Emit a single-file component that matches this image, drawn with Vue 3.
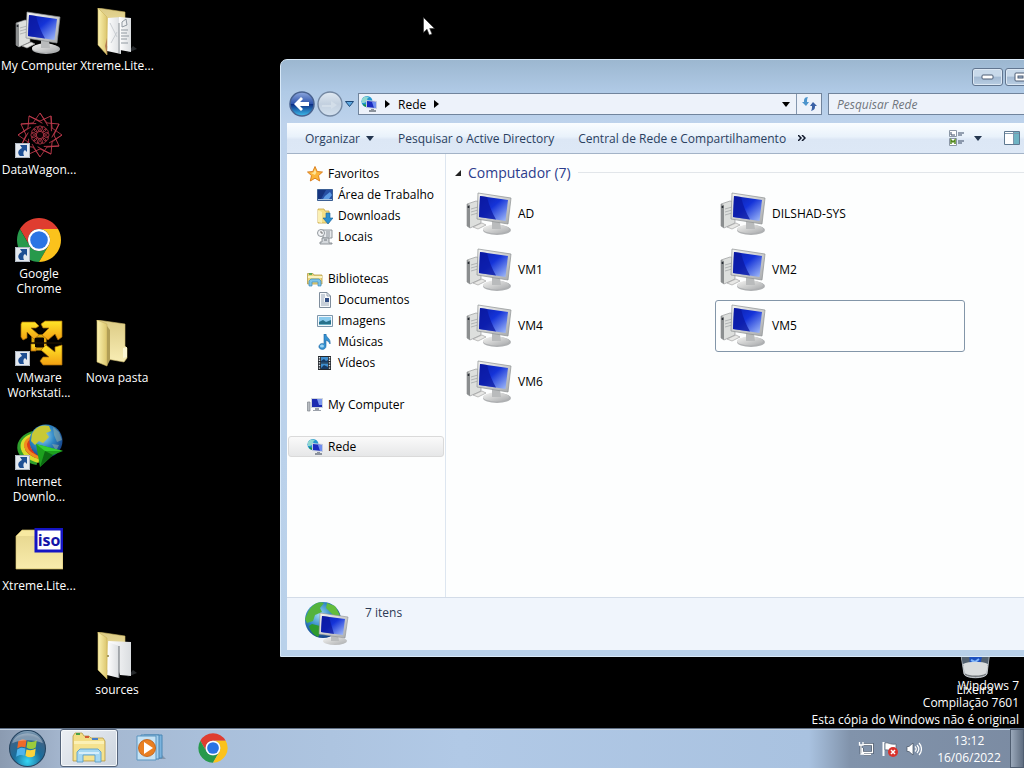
<script setup>
import { ref } from 'vue'

const shortcuts = [
  { name: 'My\u00a0Computer', icon: 'computer', col: 1, row: 1 },
  { name: 'Xtreme.Lite...', icon: 'folder-docs', col: 2, row: 1 },
  { name: 'DataWagon...', icon: 'datawagon', col: 1, row: 2, link: true },
  { name: 'Google Chrome', icon: 'chrome', col: 1, row: 3, link: true },
  { name: 'VMware Workstati...', icon: 'vmware', col: 1, row: 4, link: true },
  { name: 'Nova pasta', icon: 'folder', col: 2, row: 4 },
  { name: 'Internet Downlo...', icon: 'idm', col: 1, row: 5, link: true },
  { name: 'Xtreme.Lite...', icon: 'iso', col: 1, row: 6, tag: 'iso' },
  { name: 'sources', icon: 'folder-files', col: 2, row: 7 },
  { name: 'Lixeira', icon: 'bin', col: 13, row: 7 }
]

const tree = [
  {
    name: 'Favoritos',
    icon: 'star',
    items: [
      { name: 'Área de Trabalho', icon: 'desk' },
      { name: 'Downloads', icon: 'downloads' },
      { name: 'Locais', icon: 'places' }
    ]
  },
  {
    name: 'Bibliotecas',
    icon: 'library',
    items: [
      { name: 'Documentos', icon: 'document' },
      { name: 'Imagens', icon: 'image' },
      { name: 'Músicas', icon: 'music' },
      { name: 'Vídeos', icon: 'video' }
    ]
  },
  { name: 'My Computer', icon: 'pc', items: [] },
  { name: 'Rede', icon: 'network', items: [] }
]

const computers = ['AD', 'DILSHAD-SYS', 'VM1', 'VM2', 'VM4', 'VM5', 'VM6']

const location = ref('Rede')
const focused = ref('VM5')
const search = ref('')
</script>

<template>
  <div class="screen">
    <svg class="sprite" aria-hidden="true">
      <defs>
        <linearGradient id="g-screen" x1="0" y1="0" x2="1" y2="1">
          <stop offset="0" stop-color="#0a1ea8" />
          <stop offset="0.45" stop-color="#1433d8" />
          <stop offset="1" stop-color="#a9c2fa" />
        </linearGradient>
        <linearGradient id="g-grey" x1="0" y1="0" x2="1" y2="1">
          <stop offset="0" stop-color="#f4f4f2" />
          <stop offset="1" stop-color="#a9abad" />
        </linearGradient>
        <linearGradient id="g-folder" x1="0" y1="0" x2="1" y2="0">
          <stop offset="0" stop-color="#fbf2b0" />
          <stop offset="1" stop-color="#dcc66e" />
        </linearGradient>
        <linearGradient id="g-back" x1="0" y1="0" x2="0" y2="1">
          <stop offset="0" stop-color="#dccb85" />
          <stop offset="1" stop-color="#f8edb4" />
        </linearGradient>
        <linearGradient id="g-paper" x1="0" y1="0" x2="1" y2="0">
          <stop offset="0" stop-color="#ffffff" />
          <stop offset="1" stop-color="#dadde0" />
        </linearGradient>
        <radialGradient id="g-globe" cx="0.4" cy="0.35" r="0.7">
          <stop offset="0" stop-color="#9fdcf6" />
          <stop offset="0.5" stop-color="#2f86c4" />
          <stop offset="1" stop-color="#123a80" />
        </radialGradient>
        <linearGradient id="g-gold" x1="0" y1="0" x2="0" y2="1">
          <stop offset="0" stop-color="#ffe628" />
          <stop offset="1" stop-color="#f2a012" />
        </linearGradient>
        <radialGradient id="g-orb" cx="0.5" cy="0.85" r="0.85">
          <stop offset="0" stop-color="#36d6f4" />
          <stop offset="0.45" stop-color="#1b6d9c" />
          <stop offset="0.8" stop-color="#3e6285" />
          <stop offset="1" stop-color="#8ba9c0" />
        </radialGradient>
        <linearGradient id="g-back-btn" x1="0" y1="0" x2="0" y2="1">
          <stop offset="0" stop-color="#8ea8de" />
          <stop offset="0.48" stop-color="#2f55ac" />
          <stop offset="0.52" stop-color="#0d2f86" />
          <stop offset="1" stop-color="#3dc0ee" />
        </linearGradient>
        <linearGradient id="g-fwd-btn" x1="0" y1="0" x2="0" y2="1">
          <stop offset="0" stop-color="#e1eaf3" />
          <stop offset="0.5" stop-color="#c3d0df" />
          <stop offset="1" stop-color="#d3e1ef" />
        </linearGradient>
      </defs>

      <symbol id="i-computer" viewBox="0 -1 48 48">
        <path d="M1 14L10 11L15 12V33L4 38L1 36Z" fill="#dddfdd" stroke="#898c8d" stroke-width="0.6" />
        <path d="M1 14L4 15V38L1 36Z" fill="#8b8e8f" />
        <path d="M5 19L12 17M5 22L12 20M5 25L12 23" stroke="#a5a8a9" stroke-width="0.8" />
        <circle cx="2.5" cy="17" r="1" fill="#20252c" />
        <path d="M7 37L16 33L20 35L12 39Z" fill="#e8e8e6" stroke="#999" stroke-width="0.6" />
        <ellipse cx="31" cy="40" rx="14" ry="5" fill="#aeb0b2" />
        <ellipse cx="30" cy="39" rx="13" ry="4.4" fill="url(#g-grey)" />
        <path d="M26 31L34 32L35 39H26Z" fill="#b9bbbc" />
        <path d="M12 3L45 8L42 34L11 29Z" fill="url(#g-grey)" stroke="#8d9092" stroke-width="0.7" />
        <path d="M14 6L42 10L39.5 31L13 27Z" fill="url(#g-screen)" />
        <path d="M14 6L21 7C23 15 26 23 30 29.5L13 27Z" fill="#0b18a0" opacity="0.75" />
      </symbol>

      <symbol id="i-folder-docs" viewBox="0 0 48 48">
        <path d="M34 45L44 41L40 38Z" fill="#26292c" />
        <path d="M5 0L32 4V38H12Z" fill="url(#g-back)" stroke="#c9b462" stroke-width="0.6" />
        <path d="M15 10L28 9V46L14 43Z" fill="url(#g-paper)" />
        <path d="M26 9L38 10V44L27 42Z" fill="url(#g-paper)" />
        <path d="M29 14L33 11L34 17L29 19ZM28 22H35M28 25H34M28 28H36M28 31H34M28 35H35" fill="none" stroke="#9098a0" />
        <path d="M17 15L24 29M18 35L24 24" stroke="#c0c5ca" stroke-width="0.8" />
        <path d="M26 15V45" stroke="#8a9096" />
        <path d="M5 0L14 9V47L5 37Z" fill="url(#g-folder)" stroke="#cab35c" stroke-width="0.6" />
        <path d="M12 38L14 30V47Z" fill="#a35b49" opacity="0.7" />
      </symbol>

      <symbol id="i-folder-files" viewBox="0 0 48 48">
        <path d="M34 45L44 41L40 38Z" fill="#26292c" />
        <path d="M5 0L32 4V38H12Z" fill="url(#g-back)" stroke="#c9b462" stroke-width="0.6" />
        <path d="M15 9L38 10V44L27 43Z" fill="url(#g-paper)" />
        <path d="M15 10L26 14V46L14 43Z" fill="url(#g-paper)" />
        <path d="M26 14V46" stroke="#676d72" />
        <path d="M5 0L14 6V47L5 38Z" fill="url(#g-folder)" stroke="#cab35c" stroke-width="0.6" />
        <circle cx="15" cy="24" r="1" fill="#8f823f" />
      </symbol>

      <symbol id="i-folder" viewBox="0 0 48 48">
        <path d="M4 0L32 4V26L34 28V38L31 42L14 39Z" fill="url(#g-back)" stroke="#cdb96d" stroke-width="0.6" />
        <path d="M30 28L34 27V37L30 38Z" fill="#fbf6d2" />
        <path d="M4 0L14 4V46L4 42Z" fill="url(#g-folder)" stroke="#c7b162" stroke-width="0.6" />
        <path d="M14 46L17 40V10L14 6Z" fill="#b19e56" />
      </symbol>

      <symbol id="i-datawagon" viewBox="0 0 48 48">
        <g fill="none" stroke="#c03a4c" stroke-width="0.8">
          <path
            v-for="n in 12"
            :key="n"
            d="M18 11L25 1L32 11M25 1L33 14M25 20C21 17 22 14 25 14S29 17 25 20"
            :transform="`rotate(${n * 30} 25 23)`"
          />
        </g>
        <circle cx="25" cy="23" r="3" fill="#0c0204" />
      </symbol>

      <symbol id="i-chrome" viewBox="0 0 48 48">
        <path d="M24 13H43.05A22 22 0 0 0 4.95 13L14.47 29.5A11 11 0 0 1 24 13Z" fill="#df3d30" />
        <path d="M4.95 13A22 22 0 0 0 24 46L33.53 29.5A11 11 0 0 1 14.47 29.5Z" fill="#27994b" />
        <path d="M43.05 13A22 22 0 0 1 24 46L33.53 29.5A11 11 0 0 0 24 13Z" fill="#fbc21c" />
        <circle cx="24" cy="24" r="11" fill="#fff" />
        <circle cx="24" cy="24" r="8.8" fill="#2a74e4" />
      </symbol>

      <symbol id="i-vmware" viewBox="0 0 48 48">
        <path d="M18 16H30V29H18Z" fill="none" stroke="#e0a80c" stroke-width="3" />
        <g fill="url(#g-gold)" stroke="#a86a06" stroke-width="0.7">
          <path d="M7 2H20L24 6L21 8H16L24 15L19 19L12 12V18L8 20L6 17V4Z" />
          <path d="M47 1V17L43 20L40 14L33 20L27 15L34 8H28L26 4L30 1Z" />
          <path d="M47 45H28L25 41L28 37H34L26 30L31 25L40 32V27L47 25Z" />
          <path d="M16 24H21V31H16Z" />
        </g>
        <path d="M20 18H29V27H20Z" fill="#080400" />
        <path d="M15 23H47" stroke="#1a1000" stroke-width="1.5" />
      </symbol>

      <symbol id="i-idm" viewBox="0 0 48 48">
        <g fill="none" stroke-width="4">
          <path d="M18 9C0 14 -2 34 22 39" stroke="#2f9e2c" />
          <path d="M19 11C3 15 3 31 24 37" stroke="#d6dc2c" />
          <path d="M20 13C7 16 7 28 26 34" stroke="#f08a1e" />
          <path d="M21 15C11 18 11 26 27 31" stroke="#d93a1a" />
          <path d="M22 18C15 20 16 25 28 29" stroke="#efc9b4" />
          <path d="M18 24L28 30" stroke="#080808" />
        </g>
        <circle cx="31" cy="17" r="16.5" fill="url(#g-globe)" />
        <path d="M17 10C20 3 27 0 34 2L36 7L31 9L34 13L28 19L24 17L20 21L16 17Z" fill="#c8c936" />
        <path d="M38 3L44 8L47 16L42 18L39 11ZM37 20L44 21L41 27Z" fill="#9fb7a8" opacity="0.5" />
        <path d="M21 20L48 27L38 31L25 43Z" fill="#1da01e" />
        <path d="M21 20L48 27L30 27Z" fill="#35cf32" />
        <path d="M30 27L38 31L25 43Z" fill="#0c6a12" />
      </symbol>

      <symbol id="i-iso" viewBox="0 0 48 48">
        <path d="M1 8L7 2H20L22 6H48V41H1Z" fill="#f8e9a1" stroke="#cbb966" stroke-width="0.7" />
        <path d="M1 8H47V40H1Z" fill="url(#g-back)" opacity="0.55" />
        <path d="M21 1H47V23H21Z" fill="#fff" stroke="#1414c4" stroke-width="3" />
      </symbol>

      <symbol id="i-bin" viewBox="0 0 48 48">
        <path d="M8 10L40 10L36 42C34 47 15 47 13 42Z" fill="#a5abb0" stroke="#dfe5ea" stroke-width="0.8" />
        <path d="M10 22H38L37 34H12Z" fill="#53616f" />
        <path d="M18 20H32L29 34H19Z" fill="#1c4fbe" />
        <path d="M20 28L24 30L28 27" fill="none" stroke="#7eb4fa" stroke-width="2" />
        <path d="M12 32C18 29 31 29 37 32L35 42C31 45 17 45 14 42Z" fill="#d9dcdd" />
        <path d="M14 42C18 45 31 45 35 42" fill="none" stroke="#74797d" stroke-width="1.5" />
      </symbol>

      <symbol id="i-link" viewBox="0 0 15 15">
        <path d="M0 0H15V15H0Z" fill="#e4e9ef" />
        <path d="M0.5 0.5H14.5V14.5H0.5Z" fill="none" stroke="#aeb6c0" />
        <path d="M5 2H12V9L10 7C8 8 8 11 9 13H5C2 10 3 7 7 5Z" fill="#1e4f93" />
      </symbol>

      <symbol id="i-network" viewBox="0 0 16 16">
        <circle cx="6" cy="5.5" r="5.5" fill="#2496cf" />
        <path d="M1 3C3 0 6 0 8 1L6 3L7 5L3 7L1 7Z" fill="#8fd8d0" />
        <path d="M2 8L6 9L5 11C3 10 2 9 2 8Z" fill="#1f9440" />
        <path d="M5 4L16 5V13L5 12Z" fill="#c3cbe0" />
        <path d="M6 5L15 6V12L6 11Z" fill="#1a2cc0" />
        <path d="M11 6L15 6V12L13 12Z" fill="#6f8ef0" />
        <path d="M10 13H13V14H15V16H8V14H10Z" fill="#8b929c" />
      </symbol>

      <symbol id="i-network-big" viewBox="0 0 44 48">
        <circle cx="18" cy="20" r="18" fill="url(#g-globe)" />
        <path d="M3 12C8 3 15 1 19 3L15 8L17 12L10 15L8 21L2 23L0 19Z" fill="#54b33d" />
        <path d="M22 3L30 6L35 15L30 17L25 12L21 8Z" fill="#63bd3c" />
        <path d="M7 24L15 26L17 31L13 37C8 35 5 30 4 26Z" fill="#2e9a2d" />
        <ellipse cx="30" cy="41" rx="12" ry="4" fill="url(#g-grey)" />
        <path d="M26 34H33L34 41H26Z" fill="#b9bbbc" />
        <path d="M15 13L43 17L40 38L14 34Z" fill="url(#g-grey)" stroke="#8d9092" stroke-width="0.6" />
        <path d="M17 16L40 19L38 35L16 32Z" fill="url(#g-screen)" />
        <path d="M17 16L24 17L29 34L16 32Z" fill="#0b18a0" opacity="0.75" />
      </symbol>

      <symbol id="i-star" viewBox="0 0 16 16">
        <path d="M8 0.5L10.2 5.5L15.5 6L11.5 9.6L12.7 15L8 12.2L3.3 15L4.5 9.6L0.5 6L5.8 5.5Z" fill="#fbb53a" stroke="#d87a18" stroke-width="0.9" />
        <path d="M8 3L9.3 6.5L8 9L4 7L6.5 6.5Z" fill="#ffe59a" />
      </symbol>

      <symbol id="i-desk" viewBox="0 0 16 16">
        <path d="M0.5 2.5H15.5V13.5H0.5Z" fill="#2750a4" stroke="#3b5f93" />
        <path d="M1 3H9L4 12H1Z" fill="#16347f" />
        <path d="M8 9L13 5L15 8L12 12H6Z" fill="#5c9be4" />
        <path d="M1 12H15V13H1Z" fill="#a6c4e2" />
      </symbol>

      <symbol id="i-downloads" viewBox="0 0 16 16">
        <path d="M1 1H7L8 3H12V15H1Z" fill="#f3df86" stroke="#c6a544" stroke-width="0.8" />
        <path d="M1 2L5 4V15L1 14Z" fill="#fbf0b4" />
        <path d="M9 5H13V10H16L11 16L6 10H9Z" fill="#2b8fd0" stroke="#1a6299" stroke-width="0.6" />
      </symbol>

      <symbol id="i-places" viewBox="0 0 16 16">
        <path d="M5 1H15V9H6V6Z" fill="#e6e9ec" stroke="#878d93" stroke-width="0.9" />
        <path d="M9 3H13M9 5H13M9 7H13" stroke="#8b9299" />
        <circle cx="4" cy="4" r="3.5" fill="#f2f4f6" stroke="#878d93" stroke-width="0.9" />
        <path d="M4 2V4H6" fill="none" stroke="#555" stroke-width="0.8" />
        <path d="M5 9H12V14H15V15H3V13H5Z" fill="#d5d9dd" stroke="#868c92" stroke-width="0.9" />
        <path d="M7 11H10" stroke="#70777d" />
      </symbol>

      <symbol id="i-library" viewBox="0 0 16 16">
        <path d="M0.5 2.5H6L7 4H15V13H0.5Z" fill="#e9d67e" stroke="#b59c47" stroke-width="0.8" />
        <path d="M2 3H5" stroke="#3ea04a" stroke-width="1.5" />
        <path d="M1 6H15" stroke="#fbf3c2" stroke-width="2" />
        <path d="M2 15V10L4 8H12L14 10V15H11V11H5V15Z" fill="#7cc3e8" stroke="#3c8bbb" stroke-width="0.7" />
      </symbol>

      <symbol id="i-document" viewBox="0 0 16 16">
        <path d="M2.5 0.5H10L13.5 4V15.5H2.5Z" fill="#f8fafc" stroke="#7f8d9c" />
        <path d="M10 0.5V4H13.5" fill="none" stroke="#7f8d9c" stroke-width="0.8" />
        <path d="M4 3H8M4 5H8M4 7H7M4 9H7M4 11H12M4 13H12" stroke="#8c9cae" stroke-width="0.9" />
        <path d="M8 6H12V10H8Z" fill="#304d83" />
      </symbol>

      <symbol id="i-image" viewBox="0 0 16 16">
        <path d="M0.5 2.5H15.5V13.5H0.5Z" fill="#f4f8fb" stroke="#7c96ab" />
        <path d="M2 4H14V12H2Z" fill="#8bcbed" />
        <path d="M2 9L6 7L9 9L14 7V12H2Z" fill="#28718b" />
        <path d="M2 11H14V12H2Z" fill="#6cb3c6" />
      </symbol>

      <symbol id="i-music" viewBox="0 0 16 16">
        <path d="M7 0H9C9 4 14 4 13 10C12 7 10 7 9 6V12C9 17 1 16 2 12C3 9 6 9 7 10Z" fill="#3592d2" stroke="#1c639e" stroke-width="0.6" />
        <ellipse cx="5" cy="12" rx="2" ry="1.5" fill="#9cd4f3" />
      </symbol>

      <symbol id="i-video" viewBox="0 0 16 16">
        <path d="M1 1H14V15H1Z" fill="#24292e" />
        <path d="M4 2H11V7.5H4ZM4 8.5H11V14H4Z" fill="#3f8fd0" />
        <path d="M4 6L7 4L9 6L11 5V7.5H4ZM4 13L7 10L11 12V14H4Z" fill="#173a63" />
        <path d="M2.5 2V14M12.5 2V14" stroke="#e4eaef" stroke-width="1.4" stroke-dasharray="1.4 1.2" />
      </symbol>

      <symbol id="i-pc" viewBox="0 0 16 16">
        <path d="M0.5 5H3V14H0.5Z" fill="#b8bdc2" stroke="#7f858c" stroke-width="0.7" />
        <path d="M4 1H16V11H4Z" fill="#cfd5dd" />
        <path d="M5 2H15V10H5Z" fill="#1c2bb0" />
        <path d="M10 2H15V8H12Z" fill="#7b98ee" />
        <path d="M8 11H12V13H14V14H6V13H8Z" fill="#9ba1aa" />
      </symbol>

      <symbol id="i-orb" viewBox="0 0 36 36">
        <circle cx="18" cy="18" r="17.5" fill="url(#g-orb)" stroke="#24435f" />
        <path d="M9 11C12 9 14 9 17 10L16 17C13 16 11 16 8 18Z" fill="#ee6a2a" />
        <path d="M18 11C21 12 24 12 27 10L26 17C23 19 20 19 17 17Z" fill="#9ccb3c" />
        <path d="M8 19C11 17 13 17 16 18L15 25C12 24 10 24 7 26Z" fill="#4fb4ec" />
        <path d="M17 19C20 20 23 20 26 18L25 25C22 27 19 27 16 25Z" fill="#fbd33c" />
        <path d="M3 13C6 0 30 0 33 13C25 9 11 9 3 13Z" fill="#fff" opacity="0.35" />
      </symbol>

      <symbol id="i-explorer" viewBox="0 0 34 32">
        <path d="M1 4L3 1H10L12 4H17L19 6H31L33 9V29H1Z" fill="#f2dd85" stroke="#b79b45" stroke-width="0.8" />
        <path d="M4 2H8" stroke="#45a048" stroke-width="2" />
        <path d="M13 5H17" stroke="#cf5a35" stroke-width="2" />
        <path d="M20 7H26" stroke="#4a80c8" stroke-width="2" />
        <path d="M2 9H32V28H2Z" fill="#fbf0b5" />
        <path d="M2 12H32V28H2Z" fill="#f5e28f" />
        <path d="M5 30V20L8 17H26L29 20V30H23V23H11V30Z" fill="#a6d8f2" stroke="#5b9fc9" stroke-width="0.9" />
        <path d="M7 21H27" stroke="#e6f6fd" stroke-width="1.5" />
      </symbol>

      <symbol id="i-media" viewBox="0 0 30 28">
        <path d="M20 25L30 25L26 21Z" fill="#76879b" opacity="0.7" />
        <path d="M8 1H26V24H8Z" fill="#7ab3de" stroke="#4a87b5" />
        <path d="M5 1H23V25H5Z" fill="#a5d0ee" stroke="#4a87b5" />
        <path d="M1 2H20V26H1Z" fill="#c6e3f5" stroke="#5b95c0" />
        <circle cx="11" cy="14" r="8.5" fill="#e97f22" stroke="#bb5b12" stroke-width="0.8" />
        <path d="M8 8L17 14L8 20Z" fill="#fff" />
      </symbol>

      <symbol id="i-cursor" viewBox="0 0 12 19">
        <path d="M0.5 0.5V15.5L4 12.2L6.3 18L9 17L6.7 11.5H11.5Z" fill="#fff" stroke="#333" stroke-width="0.6" />
      </symbol>
    </svg>

    <main class="workspace">
      <div class="shortcuts">
        <button
          v-for="item in shortcuts"
          :key="item.icon"
          class="shortcut"
          :style="{ gridColumn: item.col, gridRow: item.row }"
        >
          <span class="shortcut-icon">
            <svg class="icon-48" aria-hidden="true">
              <use :href="'#i-' + item.icon" />
              <text v-if="item.tag" x="34" y="18" class="tag" text-anchor="middle">{{ item.tag }}</text>
            </svg>
            <svg v-if="item.link" class="link-badge" aria-hidden="true"><use href="#i-link" /></svg>
          </span>
          <span class="shortcut-name">{{ item.name }}</span>
        </button>
      </div>

      <div class="watermark">
        <div>Windows 7</div>
        <div>Compilação 7601</div>
        <div>Esta cópia do Windows não é original</div>
      </div>

      <section class="window" aria-label="Rede">
        <div class="titlebar">
          <button class="caption" aria-label="Minimizar">
            <svg width="15" height="7" viewBox="0 0 15 7">
              <rect x="2" y="1" width="11" height="4" rx="1" fill="#fff" stroke="#4c5d75" />
            </svg>
          </button>
          <button class="caption" aria-label="Maximizar">
            <svg width="15" height="11" viewBox="0 0 15 11">
              <rect x="2" y="1" width="11" height="8" rx="1" fill="#fff" stroke="#4c5d75" />
              <rect x="5" y="4" width="5" height="2" fill="#a9bdd5" stroke="#4c5d75" />
            </svg>
          </button>
          <button class="caption close" aria-label="Fechar">
            <svg width="11" height="9" viewBox="0 0 11 9">
              <path d="M1 0L10 9M10 0L1 9" stroke="#fff" stroke-width="3" />
            </svg>
          </button>
        </div>

        <div class="navbar">
          <div class="travel">
            <button aria-label="Voltar">
              <svg width="26" height="26" viewBox="0 0 26 26">
                <circle cx="13" cy="13" r="12" fill="url(#g-back-btn)" stroke="#48628f" stroke-width="1.5" />
                <path d="M12 6L5 13L12 20L14 18L11 15H20V11H11L14 8Z" fill="#fff" />
              </svg>
            </button>
            <button aria-label="Avançar">
              <svg width="26" height="26" viewBox="0 0 26 26">
                <circle cx="13" cy="13" r="12" fill="url(#g-fwd-btn)" stroke="#7488a2" stroke-width="1.3" />
                <path d="M5 14H14V10L20 14L14 18V16H5Z" fill="#d3dee9" />
              </svg>
            </button>
            <button aria-label="Páginas recentes">
              <svg width="9" height="6" viewBox="0 0 9 6">
                <path d="M0.5 0.5H8.5L4.5 5.5Z" fill="#5da7e0" stroke="#1c4878" />
              </svg>
            </button>
          </div>
          <div class="address">
            <div class="crumbs">
              <svg class="icon-16" aria-hidden="true"><use href="#i-network" /></svg>
              <svg width="5" height="8" viewBox="0 0 5 8"><path d="M0 0L5 4L0 8Z" /></svg>
              <a href="#">{{ location }}</a>
              <svg width="5" height="8" viewBox="0 0 5 8"><path d="M0 0L5 4L0 8Z" /></svg>
            </div>
            <button class="drop" aria-label="Locais anteriores">
              <svg width="8" height="5" viewBox="0 0 8 5"><path d="M0 0H8L4 5Z" /></svg>
            </button>
            <button class="refresh" aria-label="Atualizar">
              <svg width="15" height="14" viewBox="0 0 15 14">
                <path d="M6 0C2 0 2 3 2 5H0L4 9L7 5H5C5 3 5 2 6 0Z" fill="#4c94cc" />
                <path d="M9 14C13 13 13 11 13 9H15L11 5L8 9H10C10 11 10 12 9 14Z" fill="#3a61a6" />
              </svg>
            </button>
          </div>
          <input v-model="search" class="search" type="text" placeholder="Pesquisar Rede" aria-label="Pesquisar Rede" />
        </div>

        <div class="client">
          <div class="toolbar">
            <button>
              Organizar
              <svg width="8" height="5" viewBox="0 0 8 5"><path d="M0 0H8L4 5Z" fill="#24364f" /></svg>
            </button>
            <button>Pesquisar o Active Directory</button>
            <button>Central de Rede e Compartilhamento</button>
            <button class="more" aria-label="Mais comandos">
              <svg width="8" height="6" viewBox="0 0 8 6">
                <path d="M0 0L3 3L0 6M4 0L7 3L4 6" fill="none" stroke="#10182a" stroke-width="1.5" />
              </svg>
            </button>
            <div class="view-tools">
              <button aria-label="Modo de exibição">
                <svg width="17" height="16" viewBox="0 0 17 16">
                  <path d="M1.5 0.5H8.5V6.5H1.5ZM1.5 8.5H8.5V15.5H1.5Z" fill="#fff" stroke="#8b97a6" />
                  <path d="M3 2V5H7M10 3H16M10 5H14M10 11H16M10 13H14" fill="none" stroke="#3c4c66" />
                  <path d="M3 14V10L5 12L7 10V14" fill="none" stroke="#52891f" stroke-width="1.5" />
                </svg>
                <svg width="8" height="5" viewBox="0 0 8 5"><path d="M0 0H8L4 5Z" fill="#24364f" /></svg>
              </button>
              <button aria-label="Painel de visualização">
                <svg width="16" height="14" viewBox="0 0 16 14">
                  <path d="M0.5 0.5H15.5V13.5H0.5Z" fill="#fff" stroke="#5e7890" />
                  <path d="M10 1H15V13H10Z" fill="#6fb4c4" />
                  <path d="M1 2.5H15M9.5 1V13" stroke="#7f97ac" />
                </svg>
              </button>
            </div>
          </div>

          <div class="panes">
            <nav class="sidebar">
              <ul v-for="group in tree" :key="group.name">
                <li>
                  <a href="#" :class="{ current: group.name === location }">
                    <svg class="icon-16" aria-hidden="true"><use :href="'#i-' + group.icon" /></svg>
                    {{ group.name }}
                  </a>
                </li>
                <li v-for="item in group.items" :key="item.name">
                  <a href="#" class="child">
                    <svg class="icon-16" aria-hidden="true"><use :href="'#i-' + item.icon" /></svg>
                    {{ item.name }}
                  </a>
                </li>
              </ul>
            </nav>

            <div class="listing">
              <h2>
                <svg width="6" height="6" viewBox="0 0 6 6"><path d="M6 0V6H0Z" /></svg>
                Computador (7)
              </h2>
              <div class="tiles">
                <button
                  v-for="name in computers"
                  :key="name"
                  class="tile"
                  :class="{ focused: name === focused }"
                  @click="focused = name"
                >
                  <svg class="icon-48" aria-hidden="true"><use href="#i-computer" /></svg>
                  {{ name }}
                </button>
              </div>
            </div>
          </div>

          <footer class="details">
            <svg class="details-icon" aria-hidden="true"><use href="#i-network-big" /></svg>
            <span>7 itens</span>
          </footer>
        </div>
      </section>

      <svg class="cursor" aria-hidden="true"><use href="#i-cursor" /></svg>
    </main>

    <footer class="taskbar">
      <button class="start" aria-label="Iniciar">
        <svg width="37" height="37" aria-hidden="true"><use href="#i-orb" /></svg>
      </button>
      <div class="tasks">
        <button class="task active" aria-label="Windows Explorer">
          <svg width="34" height="32" aria-hidden="true"><use href="#i-explorer" /></svg>
        </button>
        <button class="task" aria-label="Windows Media Player">
          <svg width="30" height="28" aria-hidden="true"><use href="#i-media" /></svg>
        </button>
        <button class="task" aria-label="Google Chrome">
          <svg width="32" height="32" aria-hidden="true"><use href="#i-chrome" /></svg>
        </button>
      </div>
      <div class="tray">
        <button aria-label="Rede">
          <svg width="16" height="16" viewBox="0 0 16 16">
            <path d="M5 3.5H14.5V11.5H4.5V7M6 13.5H13M3 4V13" fill="none" stroke="#3d4a5c" stroke-width="2.6" />
            <path d="M5 3.5H14.5V11.5H4.5V7M6 13.5H13M1.5 1V4H5V1M3 4V13H6" fill="none" stroke="#fff" stroke-width="1.3" />
          </svg>
        </button>
        <button aria-label="Central de Ações">
          <svg width="16" height="16" viewBox="0 0 16 16">
            <path d="M1.5 1V15" stroke="#fff" stroke-width="2" />
            <path d="M3 2C6 1 8 4 14 3V10C9 11 6 8 3 9Z" fill="#fff" stroke="#55606f" stroke-width="0.7" />
            <circle cx="11" cy="11" r="5" fill="#d9322c" />
            <path d="M9 9L13 13M13 9L9 13" stroke="#fff" stroke-width="1.5" />
          </svg>
        </button>
        <button aria-label="Volume">
          <svg width="16" height="16" viewBox="0 0 16 16">
            <path d="M1 5.5H3L7 2V14L3 10.5H1Z" fill="#fff" stroke="#445062" stroke-width="0.7" />
            <path d="M9 5.5C10.5 7 10.5 9 9 10.5M11 4C13.3 6.5 13.3 9.5 11 12M13 2C16.3 5.5 16.3 10.5 13 14" fill="none" stroke="#fff" stroke-width="1.2" />
          </svg>
        </button>
      </div>
      <button class="clock">
        <span>13:12</span>
        <span>16/06/2022</span>
      </button>
      <button class="peek" aria-label="Mostrar área de trabalho"></button>
    </footer>
  </div>
</template>

<style>
body {
  background: #000;
  overflow: hidden;
}
</style>

<style scoped>
.screen {
  display: flex;
  flex-direction: column;
  height: 100vh;
  background: #000;
  color: #000;
  font-family: "Open Sans", "Noto Sans", sans-serif;
  font-size: 12px;
  line-height: 15px;
}

.screen * {
  box-sizing: border-box;
}

button {
  display: flex;
  align-items: center;
  padding: 0;
  border: 0;
  background: none;
  color: inherit;
  font: inherit;
}

a {
  color: inherit;
  text-decoration: none;
}

svg {
  display: block;
  flex: none;
}

.sprite {
  position: absolute;
  width: 0;
  height: 0;
}

.icon-16 {
  width: 16px;
  height: 16px;
}

.icon-48 {
  width: 48px;
  height: 48px;
}

.tag {
  font: bold 16px "Open Sans", sans-serif;
  fill: #1414a8;
  text-shadow: none;
}

/* desktop */
.workspace {
  position: relative;
  flex: 1;
  min-height: 0;
  overflow: hidden;
}

.shortcuts {
  display: grid;
  grid-template-columns: repeat(auto-fill, 78px);
  grid-auto-rows: 104px;
  padding-top: 8px;
}

.shortcut {
  flex-direction: column;
  gap: 2px;
  color: #fff;
  text-align: center;
  text-shadow: 0 1px 2px #000;
}

.shortcut-icon {
  position: relative;
}

.link-badge {
  position: absolute;
  left: 0;
  bottom: 2px;
  width: 15px;
  height: 15px;
}

.shortcut-name {
  max-width: 76px;
}

.watermark {
  position: absolute;
  right: 5px;
  bottom: 0;
  color: #fff;
  line-height: 17px;
  text-align: right;
}

.cursor {
  position: absolute;
  left: 423px;
  top: 17px;
  width: 12px;
  height: 19px;
}

/* explorer window, partly dragged past the right edge */
.window {
  position: absolute;
  left: 280px;
  right: -70px;
  top: 59px;
  bottom: 71px;
  display: flex;
  flex-direction: column;
  padding: 0 6px 6px;
  border: 1px solid #d8e9f8;
  border-radius: 7px 7px 0 0;
  background: linear-gradient(#9cb7d0, #b0cae6 32px, #bed3ec 64px, #b9d1ea);
}

.titlebar {
  display: flex;
  justify-content: flex-end;
  gap: 2px;
  padding: 8px 0 5px;
}

.caption {
  justify-content: center;
  width: 31px;
  height: 18px;
  border: 1px solid #61758f;
  border-radius: 3px;
  background: linear-gradient(#c8d9ea 45%, #a3bad3 50%, #b9cee3);
  box-shadow: inset 0 0 0 1px #dce8f4;
}

.caption.close {
  width: 49px;
  background: linear-gradient(#dc9a8c 45%, #bb4430 50%, #d58c5a);
}

.navbar {
  display: flex;
  align-items: center;
  gap: 6px;
  padding-bottom: 6px;
}

.travel {
  display: flex;
  gap: 2px;
  margin-right: -2px;
  padding-left: 2px;
}

.address {
  display: flex;
  flex: 1;
  height: 22px;
  border: 1px solid #71849c;
  background: #edf2fa;
}

.crumbs {
  display: flex;
  flex: 1;
  align-items: center;
  gap: 8px;
  padding-left: 2px;
}

.drop {
  justify-content: center;
  width: 20px;
}

.refresh {
  justify-content: center;
  width: 25px;
  border-left: 1px solid #8497af;
}

.search {
  width: 259px;
  height: 22px;
  padding: 0 8px;
  border: 1px solid #71849c;
  background: #edf2fa;
  font: inherit;
}

.search::placeholder {
  color: #70757c;
  font-style: italic;
  opacity: 1;
}

.client {
  display: flex;
  flex: 1;
  flex-direction: column;
  min-height: 0;
  background: #fdfefe;
}

.toolbar {
  display: flex;
  gap: 24px;
  height: 31px;
  padding-left: 18px;
  border-bottom: 1px solid #a3b3c7;
  background: linear-gradient(#fafdff, #e9f2fb 45%, #dce7f5 55%, #dde8f6);
  color: #2a3f5f;
}

.toolbar button {
  gap: 6px;
}

.toolbar .more {
  margin-left: -12px;
}

.view-tools {
  display: flex;
  gap: 22px;
  margin-left: auto;
  padding-right: 67px;
}

.view-tools button {
  gap: 9px;
}

.panes {
  display: flex;
  flex: 1;
  min-height: 0;
}

.sidebar {
  display: flex;
  flex: none;
  flex-direction: column;
  gap: 21px;
  width: 159px;
  padding: 9px 1px;
  border-right: 1px solid #dde6f0;
}

.sidebar ul {
  margin: 0;
  padding: 0;
  list-style: none;
}

.sidebar a {
  display: flex;
  align-items: center;
  gap: 5px;
  height: 21px;
  padding-left: 18px;
  border: 1px solid transparent;
  border-radius: 3px;
  white-space: nowrap;
}

.sidebar .child {
  padding-left: 28px;
}

.sidebar .current {
  border-color: #dadada;
  background: linear-gradient(#fafafa, #e6e7e8);
}

.listing {
  flex: 1;
  padding: 7px 0 0 9px;
}

h2 {
  display: flex;
  align-items: center;
  gap: 7px;
  margin: 0 0 4px;
  color: #2c3c8c;
  font-size: 14px;
  font-weight: 400;
  line-height: 23px;
}

h2 svg {
  fill: #222;
}

h2::after {
  flex: 1;
  height: 1px;
  background: #e2e6ea;
  content: "";
}

.tiles {
  display: grid;
  grid-template-columns: repeat(auto-fill, 250px);
  gap: 4px;
  padding-left: 6px;
}

.tile {
  gap: 4px;
  height: 52px;
  padding: 0 0 2px 4px;
  border: 1px solid transparent;
  border-radius: 3px;
}

.tile.focused {
  border-color: #8396a9;
}

.details {
  display: flex;
  gap: 16px;
  height: 53px;
  padding-left: 18px;
  border-top: 1px solid #d3dce8;
  background: #f0f5fc;
  color: #2c3a56;
}

.details-icon {
  align-self: center;
  width: 44px;
  height: 48px;
}

.details span {
  padding-top: 7px;
}

/* taskbar */
.taskbar {
  display: flex;
  flex: none;
  height: 40px;
  border-top: 1px solid #5f6f85;
  background: linear-gradient(90deg, #8b9bb1, #a3b5cd 60px, #a9bfda 200px, #b1c9e6 45%, #a9c2e0 79%, #8193ab 83%, #7b8ba2);
  box-shadow: inset 0 1px 0 #c3d1e1;
}

.start {
  justify-content: center;
  width: 54px;
}

.tasks {
  display: flex;
  flex: 1;
  gap: 4px;
  padding: 0 6px;
}

.task {
  justify-content: center;
  width: 58px;
  height: 38px;
}

.task.active {
  border: 1px solid #55647a;
  border-radius: 3px;
  background: linear-gradient(135deg, #eceff3, #cbd4df);
  box-shadow: inset 0 0 0 1px #f6f9fb;
}

.tray {
  display: flex;
  gap: 8px;
}

.clock {
  flex-direction: column;
  justify-content: center;
  gap: 2px;
  width: 82px;
  margin-left: 6px;
  color: #fff;
}

.peek {
  width: 14px;
  border: 1px solid #4f5d70;
  background: linear-gradient(90deg, #9aa8ba, #5f6d80);
}
</style>
